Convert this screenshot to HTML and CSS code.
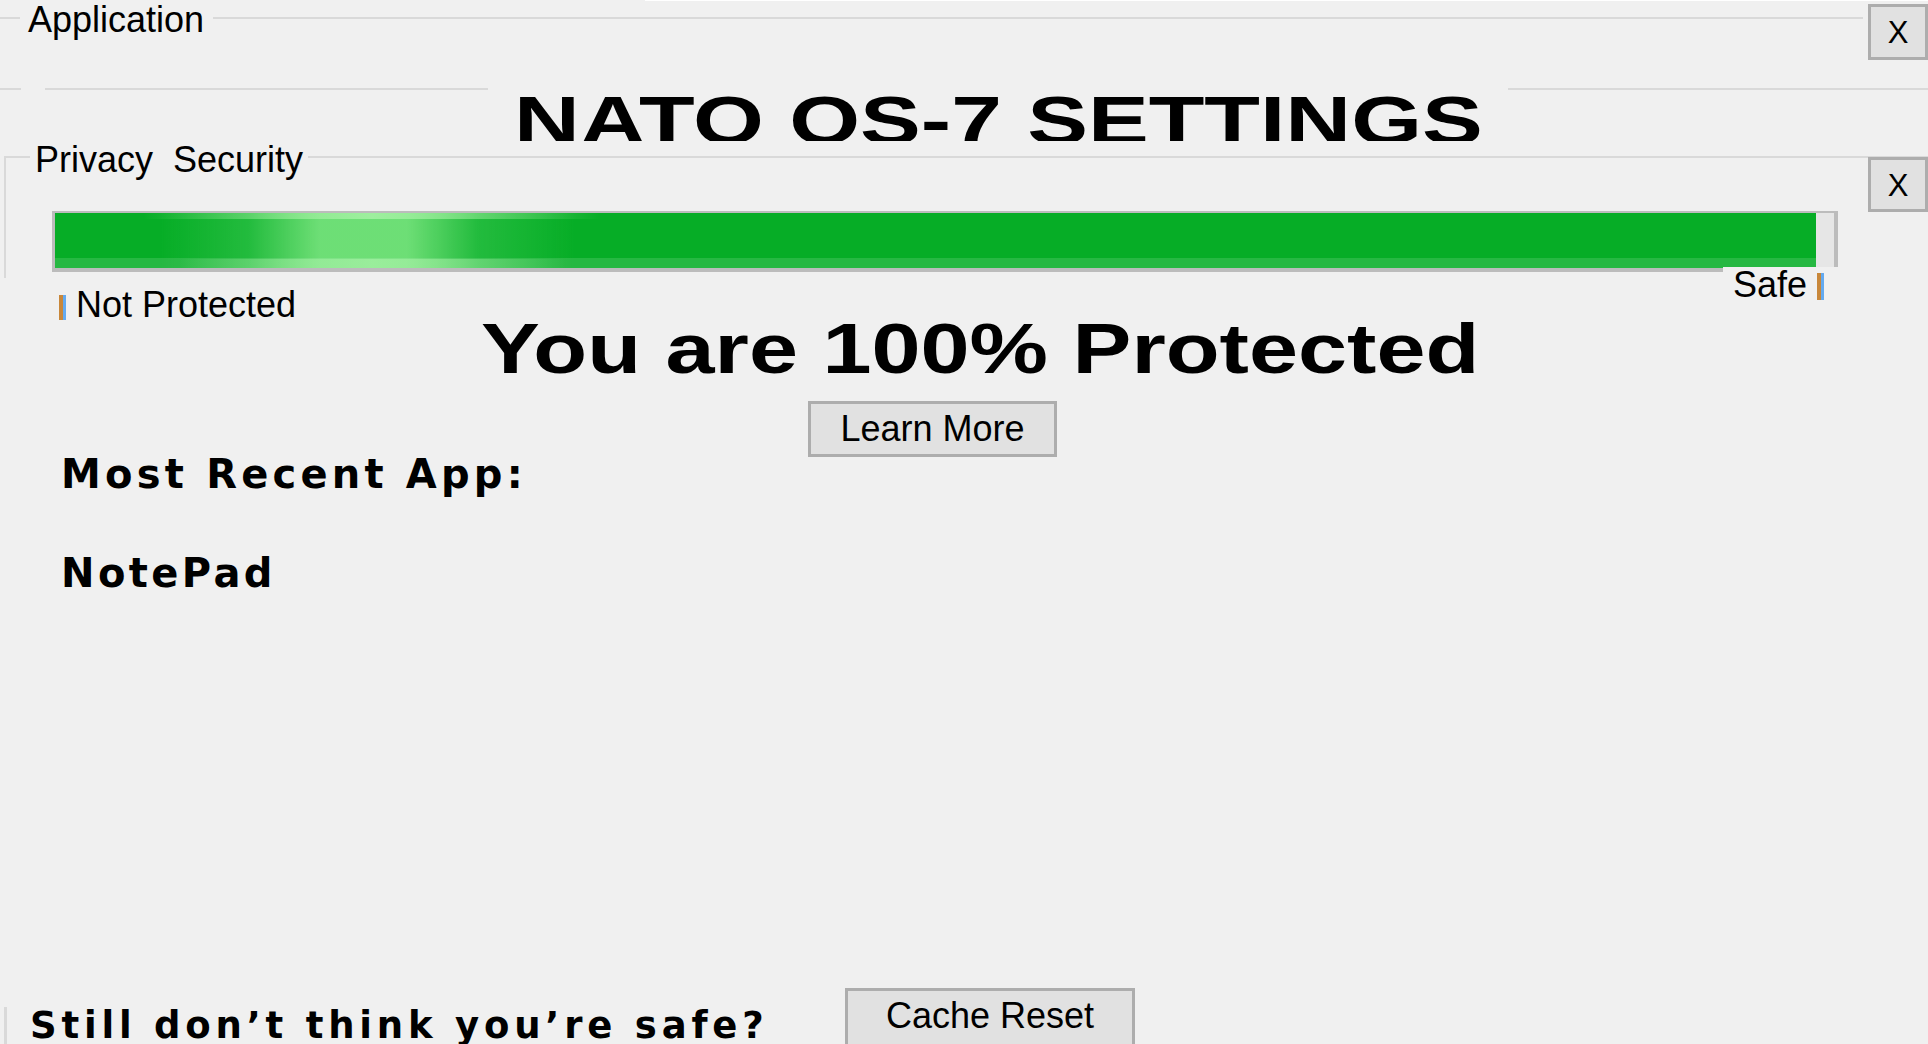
FILE: index.html
```html
<!DOCTYPE html>
<html lang="en">
<head>
<meta charset="utf-8">
<title>NATO OS-7 Settings</title>
<link rel="stylesheet" href="styles.css">
</head>
<body>
<div class="window">
  <div class="topedge"></div>
  <div class="row-app">
    <span class="seg seg-lead"></span>
    <span class="legend legend-app">Application</span>
    <span class="seg seg-fill"></span>
    <button class="close close-app">X</button>
  </div>
  <div class="row-title">
    <span class="seg seg-t1"></span>
    <span class="seg seg-t2"></span>
    <h1 class="title"><span class="title-text">NATO OS-7 SETTINGS</span></h1>
    <span class="seg seg-fill"></span>
  </div>
  <div class="pv-frame">
    <div class="pv-head">
      <span class="legend legend-pv">Privacy  Security</span>
      <button class="close close-pv">X</button>
    </div>
    <div class="bar"><div class="bar-fill" style="width:99%"></div></div>
  </div>
  <div class="bar-labels">
    <span class="lbl lbl-low"><span class="tick">|</span> Not Protected</span>
    <span class="lbl lbl-high">Safe <span class="tick tick-high">|</span></span>
  </div>
  <p class="status"><span class="status-text">You are 100% Protected</span></p>
  <button class="btn btn-learn">Learn More</button>
  <p class="pix recent-label">Most Recent App:</p>
  <p class="pix recent-app">NotePad</p>
  <div class="row-bottom">
    <div class="bottom-left">
      <span class="edge"></span>
      <p class="pix still">Still don’t think you’re safe?</p>
    </div>
    <button class="btn btn-cache">Cache Reset</button>
  </div>
</div>
</body>
</html>
```
FILE: styles.css
```css
* { box-sizing: border-box; }
html, body { margin: 0; padding: 0; }
body {
  background: #f0f0f0;
  font-family: "Liberation Sans", Arial, sans-serif;
  color: #000;
  width: 1928px;
  height: 1044px;
  overflow: hidden;
}
.window {
  display: flex;
  flex-direction: column;
  height: 1044px;
  overflow: hidden;
}
.topedge { flex: none; height: 1px; margin-left: 645px; background: #ffffff; }

.seg { display: block; flex: none; height: 2px; margin-top: 16px; background: #d9d9d9; }
.seg-lead { width: 20px; }
.seg-fill { flex: 1 1 auto; }
.legend {
  font-size: 36px;
  line-height: 36px;
  white-space: pre;
  background: #f0f0f0;
}

.close {
  flex: none;
  width: 60px;
  padding: 2px 0 0;
  border: 3px solid #adadad;
  background: #e1e1e1;
  font-family: inherit;
  font-size: 31px;
  line-height: 40px;
  color: #000;
  text-align: center;
}

.row-app { flex: none; display: flex; align-items: flex-start; height: 71px; }
.legend-app { margin: 1px 9px 0 8px; }
.close-app { height: 56px; margin: 3px 0 0 5px; }

.row-title { flex: none; display: flex; align-items: flex-start; height: 69px; overflow: hidden; }
.seg-t1 { width: 21px; }
.seg-t2 { width: 443px; margin-left: 24px; }
.title {
  flex: none;
  width: 1020px;
  margin: 14px 0 0;
  font-size: 68px;
  line-height: 68px;
  font-weight: bold;
  text-align: center;
}
.title-text { display: inline-block; white-space: nowrap; transform: scaleX(1.34); }

.pv-frame {
  flex: none;
  margin: 15px 0 0 4px;
  border-top: 2px solid #d9d9d9;
  border-left: 2px solid #d9d9d9;
  padding-bottom: 6px;
}
.pv-head { display: flex; align-items: flex-start; height: 54px; }
.legend-pv { margin: -16px 0 0 24px; padding: 0 5px; }
.close-pv { height: 55px; margin: -1px 0 0 auto; }

.bar {
  width: 1786px;
  height: 61px;
  margin: -1px 0 0 46px;
  border: solid #bcbcbc;
  border-width: 2px 4px 4px 3px;
  background: #e6e6e6;
}
.bar-fill {
  height: 100%;
  background:
    linear-gradient(90deg, rgba(160,240,160,0) 5%, rgba(160,240,160,.95) 18%, rgba(160,240,160,0) 31%) top / 100% 6px no-repeat,
    linear-gradient(90deg, rgba(160,240,160,0) 7%, rgba(160,240,160,.8) 18%, rgba(160,240,160,0) 29%) bottom / 100% 9px no-repeat,
    linear-gradient(180deg, rgba(255,255,255,0) 0, rgba(255,255,255,0) 45px, rgba(255,255,255,.13) 45px),
    linear-gradient(90deg, rgba(115,225,122,0) 6%, rgba(70,205,90,.45) 11%, rgba(115,225,122,.95) 15%, rgba(115,225,122,.95) 20%, rgba(70,205,90,.45) 24%, rgba(115,225,122,0) 29.5%),
    #06ad26;
}

.bar-labels {
  flex: none;
  display: flex;
  justify-content: space-between;
  align-items: flex-start;
  width: 1786px;
  margin: -11px 0 0 52px;
  font-size: 36px;
  line-height: 36px;
  white-space: nowrap;
}
.lbl-low { margin: 20px 0 0 7px; }
.lbl-high { background: #f0f0f0; padding: 0 14px 0 10px; }
.tick {
  display: inline-block;
  width: 7px;
  height: 25px;
  vertical-align: -3px;
  overflow: hidden;
  color: transparent;
  font-size: 20px;
  line-height: 25px;
  background: linear-gradient(90deg, #c8873a 0, #c8873a 4px, #64aaf0 4px);
}
.tick-high { height: 27px; }

.status {
  flex: none;
  margin: 0;
  padding-left: 32px;
  text-align: center;
  font-size: 70px;
  line-height: 52px;
  font-weight: bold;
}
.status-text { display: inline-block; white-space: nowrap; transform: scaleX(1.26); }

.btn {
  flex: none;
  align-self: flex-start;
  padding: 0;
  border: 3px solid #adadad;
  background: #e1e1e1;
  font-family: inherit;
  font-size: 36px;
  color: #000;
  text-align: center;
}
.btn-learn { width: 249px; height: 56px; margin: 26px 0 0 808px; line-height: 50px; }

.pix {
  flex: none;
  margin: 0;
  font-family: "DejaVu Sans", "Liberation Sans", sans-serif;
  font-weight: bold;
  white-space: nowrap;
}
.recent-label { font-size: 40px; line-height: 30px; letter-spacing: 4.2px; margin: 2px 0 0 61px; }
.recent-app { font-size: 40px; line-height: 30px; letter-spacing: 3.4px; margin: 69px 0 0 61px; }

.row-bottom {
  flex: none;
  margin-top: auto;
  height: 56px;
  display: grid;
  grid-template-columns: 845px 290px;
  align-items: start;
}
.bottom-left { display: flex; align-items: flex-start; }
.edge { flex: none; width: 3px; height: 37px; margin: 19px 0 0 4px; background: #d9d9d9; }
.still { font-size: 37px; line-height: 38px; letter-spacing: 4.8px; margin: 19px 0 0 23px; }
.btn-cache { width: 290px; height: 60px; line-height: 44px; padding: 0 0 5px; }
```
